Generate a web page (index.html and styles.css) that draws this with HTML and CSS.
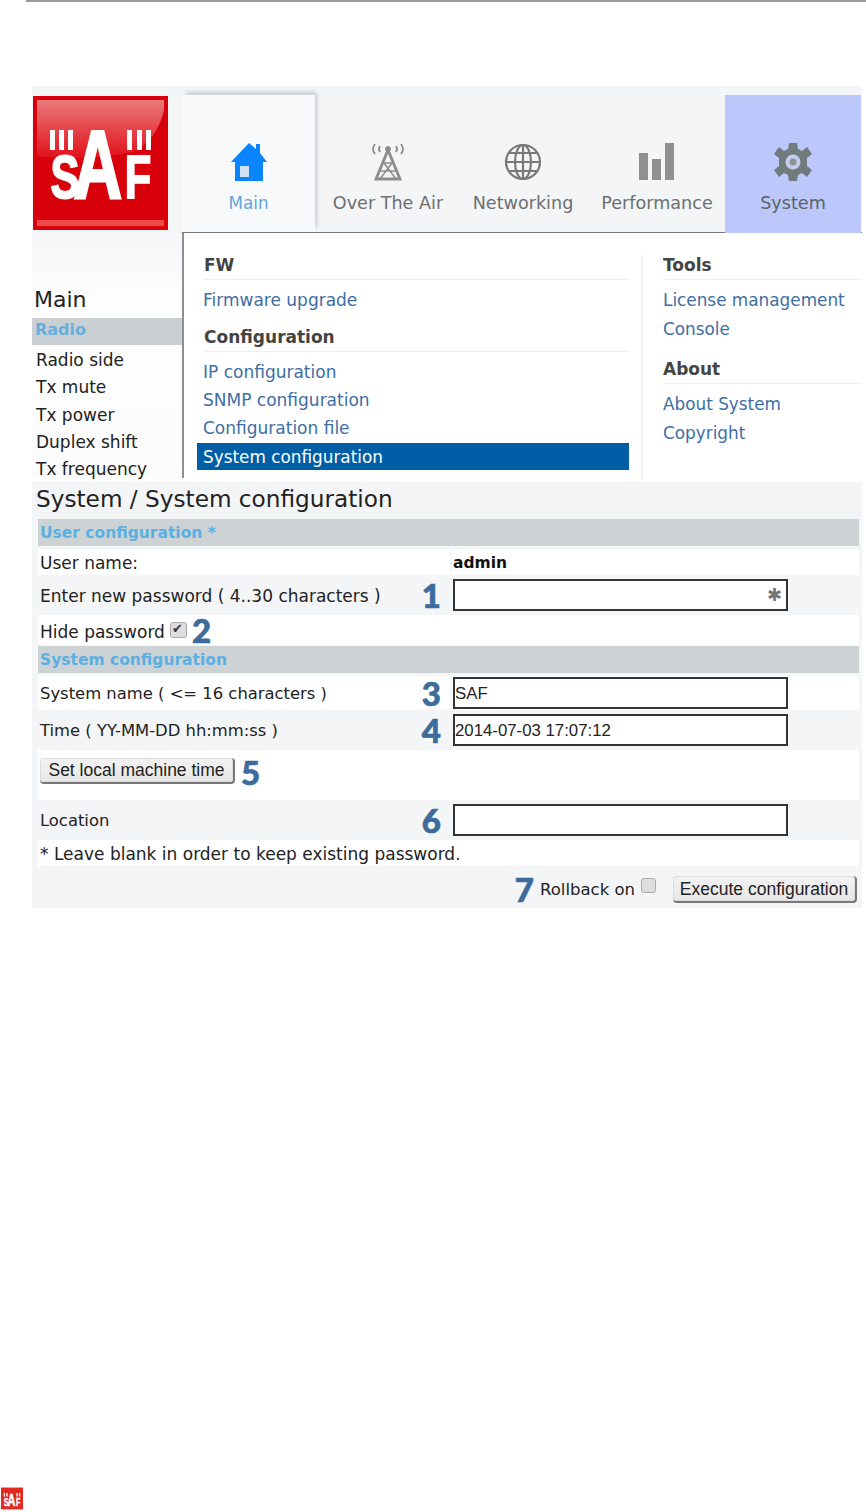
FILE: index.html
```html
<!DOCTYPE html>
<html lang="en">
<head>
<meta charset="utf-8">
<title>System configuration</title>
<link rel="stylesheet" href="styles.css">
</head>
<body>
<div class="rule"></div>
<main class="panel">
  <header class="head">
    <svg class="logo" viewBox="0 0 135 134">
      <defs><linearGradient id="gloss" x1="0" y1="0" x2="0" y2="1"><stop offset="0" stop-color="#e97a7a"/><stop offset="1" stop-color="#e2101a"/></linearGradient></defs>
      <rect width="135" height="134" fill="#d8000a"/>
      <path d="M4 4H131V14Q124 44 100 56Q50 66 4 60Z" fill="url(#gloss)"/>
      <rect x="4" y="124" width="127" height="6" fill="#ec4a4a"/>
      <path fill="#fff" d="M17 34h5v20h-5zM26 34h5v20h-5zM35 34h5v20h-5zM94 34h5v20h-5zM104 34h5v20h-5zM113 34h5v20h-5z"/>
      <text class="logo-word" transform="scale(.7 1)" y="102"><tspan class="logo-sf" x="25" y="102">S</tspan><tspan class="logo-a" x="58" y="102">A</tspan><tspan class="logo-sf" x="131" y="102">F</tspan></text>
    </svg>
    <nav class="tabs">
      <a class="tab tab-main">
        <svg class="ico" viewBox="0 0 38 38"><path fill="#0a84ff" d="M19 0 26 6V1H30V10L37 19H33V38H5V19H1Z"/><rect x="10" y="23" width="9" height="11" fill="#cfe2f5"/></svg>
        <span>Main</span>
      </a>
      <a class="tab tab-air">
        <svg class="ico" viewBox="0 0 38 38" fill="none" stroke="#8b8d8e"><path stroke-width="1.800" d="M6 1Q2 6 6 11M11 3Q9 6 11 9M32 1Q36 6 32 11M27 3Q29 6 27 9"/><circle cx="19" cy="6" r="2.500" fill="#8b8d8e"/><path stroke-width="2.800" d="M19 7 7 36H31Z"/><path stroke-width="1.500" d="M14 20H24M11 28H27M15 20 27 36M23 20 11 36"/></svg>
        <span>Over The Air</span>
      </a>
      <a class="tab tab-net">
        <svg class="ico" viewBox="0 0 38 38" fill="none" stroke="#777a7b" stroke-width="2.200"><circle cx="19" cy="19" r="17"/><ellipse cx="19" cy="19" rx="8" ry="17"/><path d="M19 2V36M2 19H36M5 10H33M5 28H33"/></svg>
        <span>Networking</span>
      </a>
      <a class="tab tab-perf">
        <svg class="ico" viewBox="0 0 38 38" fill="#8e9091"><rect x="1" y="10" width="9" height="27"/><rect x="14" y="16" width="9" height="21"/><rect x="27" y="0" width="9" height="37"/></svg>
        <span>Performance</span>
      </a>
      <a class="tab tab-sys">
        <svg class="ico" viewBox="0 0 38 38"><path fill="#707b7c" d="M15 0H23L24 6 28 8 33 4 38 11 33 15V23L38 27 33 34 28 30 24 32 23 38H15L14 32 10 30 5 34 0 27 5 23V15L0 11 5 4 10 8 14 6Z"/><circle cx="19" cy="19" r="7.500" fill="#c3ccee"/><circle cx="19" cy="19" r="3.500" fill="#8a9394"/></svg>
        <span>System</span>
      </a>
    </nav>
  </header>
  <section class="nav-area">
    <aside class="side">
      <h2 class="side-title">Main</h2>
      <div class="side-group">Radio</div>
      <ul class="side-list">
        <li>Radio side</li>
        <li>Tx mute</li>
        <li>Tx power</li>
        <li>Duplex shift</li>
        <li>Tx frequency</li>
      </ul>
    </aside>
    <div class="menu">
      <div class="menu-col menu-left">
        <h3 class="menu-h">FW</h3>
        <a class="menu-link">Firmware upgrade</a>
        <h3 class="menu-h menu-h-next">Configuration</h3>
        <a class="menu-link">IP configuration</a>
        <a class="menu-link">SNMP configuration</a>
        <a class="menu-link">Configuration file</a>
        <a class="menu-link menu-active">System configuration</a>
      </div>
      <div class="menu-col menu-right">
        <h3 class="menu-h">Tools</h3>
        <a class="menu-link">License management</a>
        <a class="menu-link">Console</a>
        <h3 class="menu-h menu-h-about">About</h3>
        <a class="menu-link">About System</a>
        <a class="menu-link">Copyright</a>
      </div>
    </div>
  </section>
  <form class="content">
    <h1 class="title">System / System configuration</h1>
    <div class="section">User configuration *</div>
    <div class="row row-white row-user">
      <div class="label">User name:</div>
      <div class="value strong">admin</div>
    </div>
    <div class="row row-field">
      <div class="label"><span>Enter new password ( 4..30 characters )</span><b class="num">1</b></div>
      <div class="value"><span class="pw"><input class="field" type="password" aria-label="New password"><i class="star">✱</i></span></div>
    </div>
    <div class="row-full row-white row-hide">
      <span>Hide password</span><input class="check" type="checkbox" checked aria-label="Hide password"><b class="num">2</b>
    </div>
    <div class="section section-second">System configuration</div>
    <div class="row row-white row-name">
      <div class="label label-tight"><span>System name ( &lt;= 16 characters )</span><b class="num">3</b></div>
      <div class="value"><input class="field" type="text" value="SAF" aria-label="System name"></div>
    </div>
    <div class="row row-field">
      <div class="label label-tight"><span>Time ( YY-MM-DD hh:mm:ss )</span><b class="num">4</b></div>
      <div class="value"><input class="field" type="text" value="2014-07-03 17:07:12" aria-label="Time"></div>
    </div>
    <div class="row-full row-white row-set">
      <button class="btn btn-set" type="button">Set local machine time</button><b class="num">5</b>
    </div>
    <div class="row row-field">
      <div class="label label-tight"><span>Location</span><b class="num">6</b></div>
      <div class="value"><input class="field" type="text" aria-label="Location"></div>
    </div>
    <div class="row-full row-white row-note">* Leave blank in order to keep existing password.</div>
    <div class="actions">
      <b class="num">7</b><span class="rollback">Rollback on</span><input class="check check-off" type="checkbox" aria-label="Rollback on">
      <button class="btn btn-exec" type="button">Execute configuration</button>
    </div>
  </form>
</main>
<footer class="foot">
  <svg class="foot-logo" viewBox="0 0 135 134">
    <rect width="135" height="134" fill="#de2a20"/>
    <path fill="#fff" d="M17 34h8v20h-8zM33 34h8v20h-8zM94 34h8v20h-8zM110 34h8v20h-8z"/>
    <text class="logo-word" transform="scale(.7 1)" y="110"><tspan class="logo-sf" x="25" y="110">S</tspan><tspan class="logo-a" x="58" y="110">A</tspan><tspan class="logo-sf" x="131" y="110">F</tspan></text>
  </svg>
</footer>
</body>
</html>
```
FILE: styles.css
```css
* { box-sizing: border-box; }
html, body { margin: 0; padding: 0; background: #fff; }
body { width: 866px; height: 1512px; overflow: hidden; font-family: "DejaVu Sans", Verdana, sans-serif; font-size: 17px; color: #222; }
.logo-word { font-family: "Liberation Sans", sans-serif; font-weight: 700; fill: #fff; stroke: #fff; }
.logo-sf { font-size: 62px; stroke-width: 2px; }
.logo-a { font-size: 96px; stroke-width: 3px; }
.rule { height: 2px; margin-left: 26px; background: #999; }

.panel { width: 830px; margin: 84px 0 0 32px; }

.head { display: flex; height: 147px; background: #f3f5f7; }
.logo { width: 135px; height: 134px; margin: 10px 14px 0 1px; flex: none; }
.tabs { display: flex; align-items: flex-end; flex: 1; height: 147px; border-bottom: 1px solid #777; }
.tab { display: flex; flex-direction: column; align-items: center; height: 137px; padding-top: 48px; color: #6d6f70; font-size: 17.600px; flex: none; }
.tab span { margin-top: 11px; line-height: 22px; white-space: nowrap; }
.ico { width: 38px; height: 38px; flex: none; }
.tab-main { width: 133px; margin-right: 4px; color: #64a6d6; background: #f7f9fb; box-shadow: 3px -4px 4px -1px #c9cdcf; }
.tab-main span { font-size: 16.800px; }
.tab-air { width: 138px; }
.tab-net { width: 132px; }
.tab-perf { width: 136px; }
.tab-sys { width: 136px; margin-bottom: -1px; height: 138px; color: #5a6368; background: #bcc8fb; }

.nav-area { display: flex; height: 245px; }
.side { width: 150px; flex: none; padding-top: 52px; background: linear-gradient(#f5f6f8, #fff 35%, #fbfbfb); }
.side-title { margin: 0 0 0 2px; height: 33px; font-weight: 400; font-size: 22px; line-height: 30px; color: #222; }
.side-group { height: 27px; padding-left: 3px; line-height: 24px; font-size: 16px; font-weight: 700; color: #68aedb; background: #c9cfd2; }
.side-list { list-style: none; margin: 0; padding: 0 0 0 4px; }
.side-list li { height: 27.250px; line-height: 30px; white-space: nowrap; color: #222; }

.menu { display: flex; flex: 1; background: #fff; border-left: 2px solid #8d8f90; padding-left: 13px; }
.menu-col { display: flex; flex-direction: column; }
.menu-left { width: 432px; padding-top: 18px; }
.menu-right { flex: 1; margin: 22px 0 0 12px; padding: 0 0 0 20px; border-left: 2px solid #f0f0f0; }
.menu-h { margin: 0 0 0 7px; height: 29px; line-height: 29px; font-size: 17px; font-weight: 700; color: #444; border-bottom: 1px solid #eee; }
.menu-h-next { margin-top: 8px; }
.menu-right .menu-h { margin-left: 0; margin-top: -4px; }
.menu-right .menu-h-about { margin-top: 11px; }
.menu-link { display: block; height: 28.500px; padding-left: 6px; line-height: 27px; white-space: nowrap; color: #3d6ea6; }
.menu-left .menu-link { height: 28px; line-height: 29px; }
.menu-left .menu-h + .menu-link { margin-top: 6px; }
.menu-left .menu-h:first-child + .menu-link { margin-top: 7px; line-height: 27px; }
.menu-right .menu-h + .menu-link { margin-top: 7px; }
.menu-right .menu-link { padding-left: 0; font-size: 16.850px; }
.menu-left .menu-active { height: 27px; margin-top: 0.500px; line-height: 29px; font-size: 16.850px; color: #fff; background: #005ea6; }

.content { display: block; height: 426px; margin-top: 4px; padding: 0 3px 0 6px; background: #f3f5f7; }
.title { margin: 0 0 0 -2px; height: 37px; font-size: 23.200px; line-height: 33px; font-weight: 400; color: #222; }
.section { height: 27px; margin-bottom: 3px; padding-left: 2px; line-height: 29px; font-size: 15.500px; font-weight: 700; color: #5ab0e2; background: #cdd3d5; }
.section-second { margin-top: 1px; }
.row { display: grid; grid-template-columns: 412px 407px; column-gap: 2px; height: 40px; }
.row-user { height: 26px; }
.row-name { height: 34px; }
.row-white .label, .row-white .value, .row-full.row-white { background: #fff; }
.label { display: flex; align-items: center; justify-content: space-between; padding: 1px 9px 0 2px; white-space: nowrap; }
.label-tight { font-size: 16.400px; }
.value { display: flex; align-items: center; padding-left: 1px; }
.strong { padding-top: 2px; font-size: 15.500px; font-weight: 700; color: #111; }
.row-full { display: flex; align-items: center; padding-left: 2px; white-space: nowrap; }
.row-hide { height: 30px; padding-top: 4px; }
.row-set { height: 50px; align-items: flex-start; padding-top: 8px; }
.row-note { height: 26px; padding-top: 1px; }
.num { margin-bottom: 2px; font: 900 33px/20px Lato, sans-serif; color: #3d6c9c; -webkit-text-stroke: 0.7px #3d6c9c; }
.row-hide .num { margin: 0 0 4px 5px; }
.row-set .num { margin: 4px 0 0 6px; }
.field { display: block; width: 335px; height: 32px; margin: 0; padding: 1px 0 0; border: 2px solid #333; border-radius: 0; background: #fff; font: 16.800px "Liberation Sans", sans-serif; color: #222; }
.pw { position: relative; display: block; }
.star { position: absolute; right: 6px; top: 5px; font: 700 18px/22px "DejaVu Sans", sans-serif; color: #777; }
.check { appearance: none; -webkit-appearance: none; position: relative; width: 17px; height: 16px; margin: 0 0 4px 5px; border: 1px solid #aaa; border-radius: 3px; background: #dedede; flex: none; }
.check:checked::after { content: "✔"; position: absolute; left: 1px; top: -3px; font: 13px/18px "DejaVu Sans", sans-serif; color: #333; }
.btn { margin: 0; padding: 0; border: 0; border-right: 2px solid #777; border-bottom: 2px solid #777; border-radius: 4px; background: linear-gradient(#f3f3f3, #e6e6e6); font: 17.500px/22px "Liberation Sans", sans-serif; color: #222; white-space: nowrap; box-shadow: inset 0 0 0 1px #ddd; }
.btn-set { width: 195px; height: 26px; }
.actions { display: flex; align-items: center; justify-content: flex-end; height: 42px; padding: 5px 2px 0 0; }
.rollback { margin-left: 6px; font-size: 16.500px; white-space: nowrap; }
.check-off { width: 15px; height: 15px; margin: 0 0 8px 6px; }
.btn-exec { width: 184px; height: 27px; margin-left: 17px; }

.foot { margin-top: 579px; padding-left: 1px; }
.foot-logo { display: block; width: 22px; height: 23px; }
```
